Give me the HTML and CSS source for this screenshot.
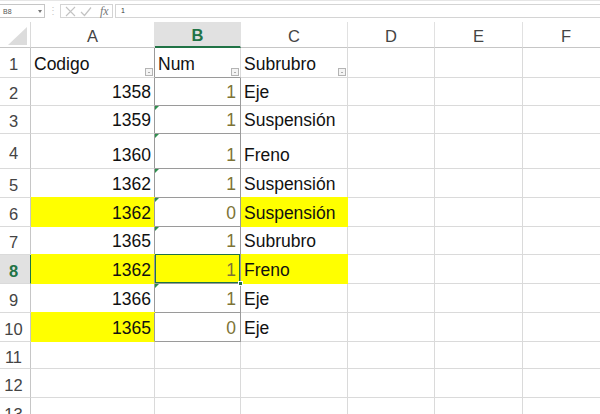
FILE: index.html
```html
<!DOCTYPE html>
<html lang="es">
<head>
<meta charset="utf-8">
<title>Hoja</title>
<link rel="stylesheet" href="styles.css">
</head>
<body>
<div class="fbar">
  <div class="namebox"><span>B8</span><span class="nb-arrow"></span></div>
  <div class="grip">⋮</div>
  <div class="fx-box">
    <svg class="ic" width="11" height="11" viewBox="0 0 11 11"><path d="M1 1L10 10M10 1L1 10" stroke="#c3c3c3" stroke-width="1.1" fill="none"/></svg>
    <svg class="ic" width="12" height="11" viewBox="0 0 12 11"><path d="M1 6L4.5 9.5L11 1.5" stroke="#c3c3c3" stroke-width="1.2" fill="none"/></svg>
    <span class="fx">fx</span>
  </div>
  <div class="finput">1</div>
</div>
<div class="sheet">
  <div class="c corner"><span class="tri"></span></div>
  <div class="c ch">A</div>
  <div class="c ch sel">B</div>
  <div class="c ch">C</div>
  <div class="c ch">D</div>
  <div class="c ch">E</div>
  <div class="c ch">F</div>

  <div class="c rh">1</div>
  <div class="c t aend">Codigo<span class="filt"></span></div>
  <div class="c t bhead">Num<span class="filt"></span></div>
  <div class="c t">Subrubro<span class="filt"></span></div>
  <div class="c"></div><div class="c"></div><div class="c"></div>

  <div class="c rh">2</div>
  <div class="c n aend">1358</div>
  <div class="c n b">1</div>
  <div class="c t">Eje</div>
  <div class="c"></div><div class="c"></div><div class="c"></div>

  <div class="c rh">3</div>
  <div class="c n aend">1359</div>
  <div class="c n b err">1</div>
  <div class="c t">Suspensión</div>
  <div class="c"></div><div class="c"></div><div class="c"></div>

  <div class="c rh">4</div>
  <div class="c n aend">1360</div>
  <div class="c n b err">1</div>
  <div class="c t">Freno</div>
  <div class="c"></div><div class="c"></div><div class="c"></div>

  <div class="c rh">5</div>
  <div class="c n aend">1362</div>
  <div class="c n b err">1</div>
  <div class="c t">Suspensión</div>
  <div class="c"></div><div class="c"></div><div class="c"></div>

  <div class="c rh">6</div>
  <div class="c n aend y">1362</div>
  <div class="c n b err">0</div>
  <div class="c t y">Suspensión</div>
  <div class="c"></div><div class="c"></div><div class="c"></div>

  <div class="c rh">7</div>
  <div class="c n aend">1365</div>
  <div class="c n b err">1</div>
  <div class="c t">Subrubro</div>
  <div class="c"></div><div class="c"></div><div class="c"></div>

  <div class="c rh rsel">8</div>
  <div class="c n aend y">1362</div>
  <div class="c n b y active">1</div>
  <div class="c t y">Freno</div>
  <div class="c"></div><div class="c"></div><div class="c"></div>

  <div class="c rh">9</div>
  <div class="c n aend">1366</div>
  <div class="c n b err">1</div>
  <div class="c t">Eje</div>
  <div class="c"></div><div class="c"></div><div class="c"></div>

  <div class="c rh">10</div>
  <div class="c n aend y">1365</div>
  <div class="c n b">0</div>
  <div class="c t">Eje</div>
  <div class="c"></div><div class="c"></div><div class="c"></div>

  <div class="c rh">11</div>
  <div class="c"></div><div class="c"></div><div class="c"></div><div class="c"></div><div class="c"></div><div class="c"></div>

  <div class="c rh">12</div>
  <div class="c"></div><div class="c"></div><div class="c"></div><div class="c"></div><div class="c"></div><div class="c"></div>

  <div class="c rh">13</div>
  <div class="c"></div><div class="c"></div><div class="c"></div><div class="c"></div><div class="c"></div><div class="c"></div>
</div>
</body>
</html>
```
FILE: styles.css
```css
html, body {
  margin: 0;
  padding: 0;
  background: #fff;
  overflow: hidden;
  width: 600px;
  height: 414px;
}
body {
  font-family: "Liberation Sans", Arial, sans-serif;
}

/* formula bar */
.fbar {
  height: 22px;
  display: flex;
  align-items: flex-start;
  padding-top: 3px;
  box-sizing: border-box;
  border-top: 1px solid #e6e6e6;
  font-size: 7px;
  color: #444;
}
.namebox {
  width: 45px;
  height: 14px;
  box-sizing: border-box;
  border: 1px solid #c6c6c6;
  border-left: none;
  display: flex;
  align-items: center;
  justify-content: space-between;
  padding: 0 2px 0 3px;
  color: #555;
}
.nb-arrow {
  width: 0;
  height: 0;
  border-left: 2.5px solid transparent;
  border-right: 2.5px solid transparent;
  border-top: 3px solid #777;
}
.grip {
  width: 15px;
  text-align: center;
  color: #c8c8c8;
  font-size: 10px;
  line-height: 14px;
}
.fx-box {
  width: 53px;
  height: 14px;
  box-sizing: border-box;
  border: 1px solid #d4d4d4;
  display: flex;
  align-items: center;
  gap: 4px;
  padding-left: 4px;
}
.fx {
  font-family: "Liberation Serif", serif;
  font-style: italic;
  font-size: 12px;
  color: #777;
  margin-left: 4px;
  line-height: 12px;
}
.finput {
  flex: 1;
  margin-left: 2px;
  height: 14px;
  box-sizing: border-box;
  border: 1px solid #d4d4d4;
  border-right: none;
  padding-left: 5px;
  line-height: 12px;
  color: #333;
}

/* sheet grid */
.sheet {
  display: grid;
  grid-template-columns: 31px 124px 86px 107px 87px 88px 87px;
  grid-template-rows: 26px 30px 28px 28px 35px 29px 29px 28px 29px 29px 29px 27px 29px 29px;
  width: 610px;
}
.c {
  position: relative;
  box-sizing: border-box;
  border-right: 1px solid #dadada;
  border-bottom: 1px solid #dadada;
  display: flex;
  align-items: flex-end;
  padding: 0 3px 3px;
  font-size: 17.5px;
  line-height: 20px;
  color: #111;
  white-space: nowrap;
}
.corner {
  border-bottom-color: #c6c6c6;
}
.tri {
  position: absolute;
  right: 3px;
  bottom: 2px;
  width: 0;
  height: 0;
  border-left: 19px solid transparent;
  border-bottom: 18px solid #dcdcdc;
}
.ch {
  justify-content: center;
  align-items: center;
  padding: 2px 0 0;
  font-size: 16.5px;
  color: #444;
  border-right-color: #e1e1e1;
  border-bottom-color: #c6c6c6;
}
.ch.sel {
  background: #e1e1e1;
  color: #217346;
  font-weight: bold;
  border-bottom: 2px solid #217346;
}
.rh {
  justify-content: center;
  align-items: center;
  padding: 3px 3px 0 0;
  font-size: 16.5px;
  color: #444;
  border-right-color: #c6c6c6;
}
.rh.rsel {
  background: #e1e1e1;
  color: #217346;
  font-weight: bold;
  border-right: 1px solid #217346;
}
.t {
  justify-content: flex-start;
}
.n {
  justify-content: flex-end;
  padding-right: 3px;
}
.aend {
  border-right-color: #9a9a9a;
}
.bhead {
  border-bottom-color: #9a9a9a;
}
.b {
  color: #7d7336;
  border-right-color: #9a9a9a;
  border-bottom-color: #9a9a9a;
  padding-right: 4px;
}
.y {
  background: #ffff00;
  box-shadow: 0 -1px 0 #ffff00;
}
.t.y {
  border-bottom-color: #ffff00;
  border-right-color: #ffff00;
}
.n.aend.y {
  border-bottom-color: #ffff00;
}
.b.y {
  box-shadow: none;
}

/* overlays */
.filt {
  position: absolute;
  right: 1px;
  bottom: 1px;
  width: 8px;
  height: 8px;
  box-sizing: border-box;
  border: 1px solid #b4b4b4;
  background: #f4f4f4;
}
.filt::after {
  content: "";
  position: absolute;
  left: 1.5px;
  top: 2.5px;
  border-left: 1.5px solid transparent;
  border-right: 1.5px solid transparent;
  border-top: 1.5px solid #666;
}
.err::before {
  content: "";
  position: absolute;
  left: 0;
  top: 0;
  width: 0;
  height: 0;
  border-top: 4px solid #2f8f4e;
  border-right: 4px solid transparent;
}
.active::after {
  content: "";
  position: absolute;
  left: 0;
  top: -1px;
  right: 0;
  bottom: 0;
  border: 1px solid #217346;
}
.active::before {
  content: "";
  position: absolute;
  right: -3px;
  bottom: -3px;
  width: 5px;
  height: 5px;
  box-sizing: border-box;
  background: #217346;
  border: 1px solid #fff;
  z-index: 2;
}
```
